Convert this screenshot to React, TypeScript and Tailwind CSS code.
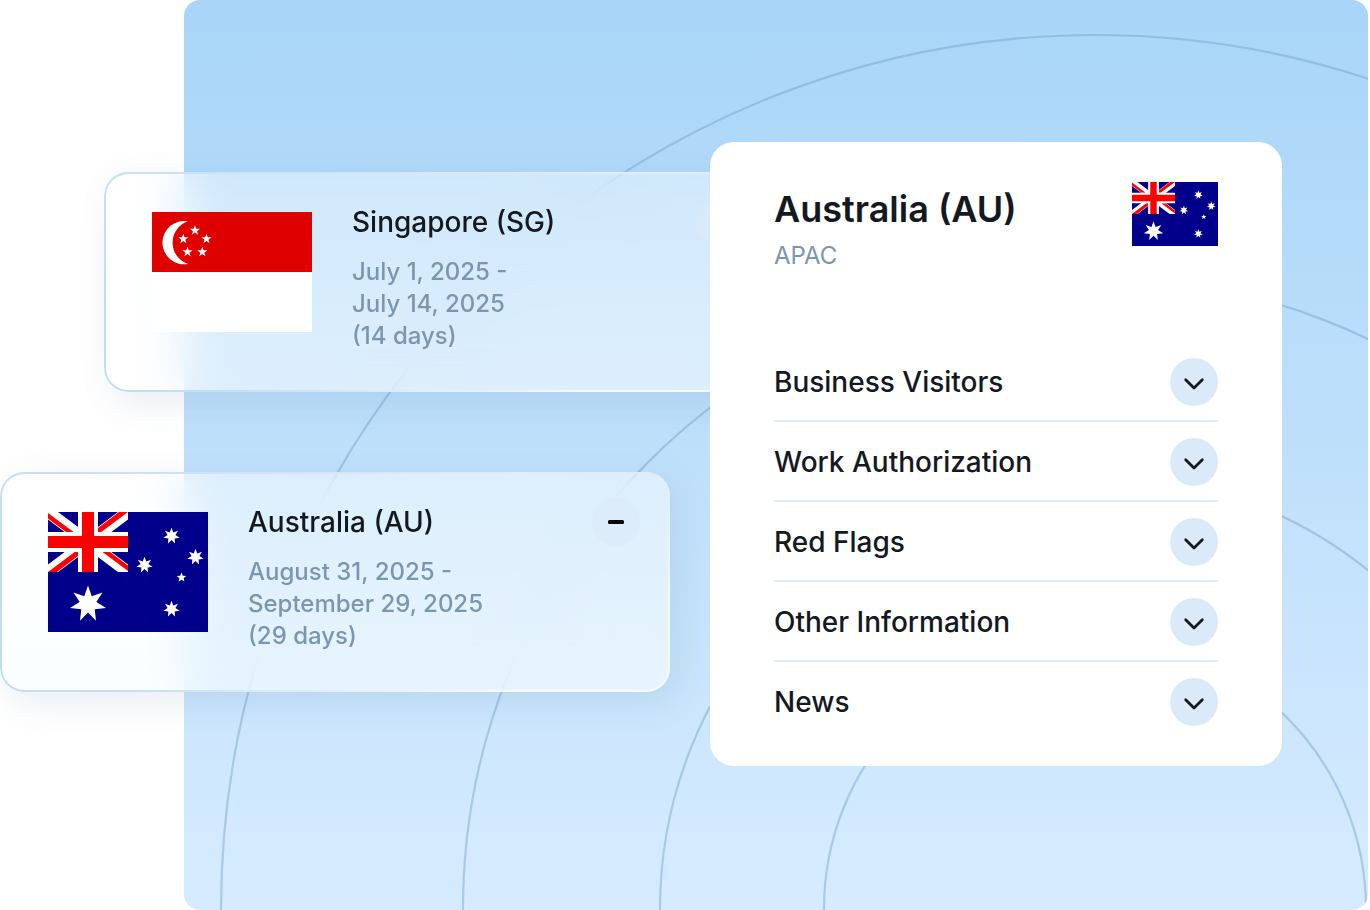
import React from "react";

const star = (cx: number, cy: number, outer: number, inner: number, points: number): string =>
  Array.from({ length: points * 2 }, (_, i) => {
    const r = i % 2 === 0 ? outer : inner;
    const a = (Math.PI * i) / points - Math.PI / 2;
    return `${(cx + r * Math.cos(a)).toFixed(2)},${(cy + r * Math.sin(a)).toFixed(2)}`;
  }).join(" ");

function AustraliaFlag({ className }: { className: string }) {
  return (
    <svg viewBox="0 0 160 120" preserveAspectRatio="none" className={className} role="img" aria-label="Flag of Australia">
      <rect width="160" height="120" fill="#00008b" />
      <svg width="80" height="60" viewBox="0 0 80 60">
        <path d="M0 0 80 60M80 0 0 60" stroke="#fff" strokeWidth="12" />
        <path
          d="M0 1 25.500 20H18L0 6.500ZM80 0H71L50 16V20H53.300ZM0 60H9L30 44V40H26.700ZM80 59 54.500 40H62L80 53.500Z"
          fill="#f00"
        />
        <path d="M40 0v60M0 30h80" stroke="#fff" strokeWidth="20" />
        <path d="M40 0v60M0 30h80" stroke="#f00" strokeWidth="12" />
      </svg>
      <g fill="#fff">
        <polygon points={star(40, 92, 18.5, 8.6, 7)} />
        <polygon points={star(123.5, 24, 8.3, 4, 7)} />
        <polygon points={star(96.5, 53, 8.3, 4, 7)} />
        <polygon points={star(147.5, 45, 8.3, 4, 7)} />
        <polygon points={star(123.5, 97, 8.3, 4, 7)} />
        <polygon points={star(133.5, 65.5, 5, 2.2, 5)} />
      </g>
    </svg>
  );
}

function SingaporeFlag({ className }: { className: string }) {
  return (
    <svg viewBox="0 0 160 120" className={className} role="img" aria-label="Flag of Singapore">
      <rect width="160" height="120" fill="#fff" />
      <rect width="160" height="60" fill="#df0000" />
      <path d="M36 9.300A21.700 21.700 0 1 0 36 52A22.500 22.500 0 0 1 36 9.300Z" fill="#fff" />
      <g fill="#fff">
        <polygon points={star(43, 18.5, 5.3, 2.1, 5)} />
        <polygon points={star(31.3, 27, 5.3, 2.1, 5)} />
        <polygon points={star(54.5, 27, 5.3, 2.1, 5)} />
        <polygon points={star(35.5, 40, 5.3, 2.1, 5)} />
        <polygon points={star(50.3, 40, 5.3, 2.1, 5)} />
      </g>
    </svg>
  );
}

function Rings() {
  return (
    <svg
      viewBox="184 0 1184 910"
      preserveAspectRatio="xMaxYMax slice"
      className="h-full w-full"
      fill="none"
      stroke="#6c98c2"
      strokeOpacity="0.4"
      strokeWidth="2.200"
      aria-hidden="true"
    >
      <circle cx="1095" cy="909" r="874" />
      <circle cx="1095" cy="909" r="632" />
      <circle cx="1095" cy="909" r="435" />
      <circle cx="1095" cy="909" r="271" />
    </svg>
  );
}

interface TripProps {
  flag: React.ReactNode;
  country: string;
  dates: string[];
  className: string;
}

function TripCard({ flag, country, dates, className }: TripProps) {
  return (
    <article
      className={`relative flex h-[220px] w-full items-start gap-10 rounded-3xl py-10 pr-[30px] pl-12 shadow-[8px_10px_36px_rgba(60,95,140,0.12)] backdrop-blur-[24px] ${className}`}
    >
      <div
        aria-hidden="true"
        className="pointer-events-none absolute inset-0 rounded-3xl bg-[linear-gradient(100deg,#bfdcf7_0%,#c4def6_22%,#d9e9f8_42%,#f4faff_75%)] p-0.5 [mask:linear-gradient(#000_0_0)_content-box_exclude,linear-gradient(#000_0_0)]"
      />
      <div
        aria-hidden="true"
        className="pointer-events-none absolute inset-0 rounded-3xl bg-linear-to-b from-[#cfe3f6]/60 to-[#cfe3f6]/0 to-60% p-0.5 [mask:linear-gradient(#000_0_0)_content-box_exclude,linear-gradient(#000_0_0)]"
      />
      {flag}
      <div className="flex-1">
        <h2 className="-mt-2 text-[28px] leading-9 font-medium text-[#14181f]">{country}</h2>
        <p className="mt-4 text-2xl leading-8 font-medium text-[#7b96b0]">
          {dates.map((line) => (
            <span key={line} className="block">
              {line}
            </span>
          ))}
        </p>
      </div>
      <button
        type="button"
        aria-label={`Collapse ${country}`}
        className="-mt-3.5 flex size-12 items-center justify-center rounded-full bg-[#dceaf8]/60"
      >
        <svg width="16" height="4" aria-hidden="true">
          <rect width="16" height="4" rx="1.500" fill="#000" />
        </svg>
      </button>
    </article>
  );
}

const sections = ["Business Visitors", "Work Authorization", "Red Flags", "Other Information", "News"];

export default function App() {
  return (
    <main className="relative isolate min-h-screen overflow-hidden bg-white font-['Inter',sans-serif]">
      <div className="absolute inset-y-0 right-0.5 left-46 -z-10 overflow-hidden rounded-2xl bg-linear-to-b from-[#a8d5f8] via-[#bfe0fb] to-[#d6ebff]">
        <Rings />
      </div>
      <div className="grid grid-cols-[670fr_572fr] items-start gap-10 pt-[142px] pr-22">
        <div className="flex flex-col gap-20 pt-[30px]">
          <TripCard
            className="ml-[104px] bg-linear-to-b from-white/40 to-white/50"
            flag={<SingaporeFlag className="h-[120px] w-40 shrink-0" />}
            country="Singapore (SG)"
            dates={["July 1, 2025 -", "July 14, 2025", "(14 days)"]}
          />
          <TripCard
            className="bg-linear-to-b from-white/45 to-[#f8feff]/60"
            flag={<AustraliaFlag className="h-[120px] w-40 shrink-0" />}
            country="Australia (AU)"
            dates={["August 31, 2025 -", "September 29, 2025", "(29 days)"]}
          />
        </div>
        <section className="relative rounded-3xl bg-white px-16 py-10">
          <header className="flex items-start justify-between">
            <div>
              <h1 className="mt-1 text-4xl leading-[46px] font-semibold text-[#14181f]">Australia (AU)</h1>
              <p className="mt-1 text-2xl leading-10 text-[#7a95b0]">APAC</p>
            </div>
            <AustraliaFlag className="h-16 w-[86px]" />
          </header>
          <ul className="mt-[66px]">
            {sections.map((name) => (
              <li
                key={name}
                className="flex items-center justify-between border-b-2 border-[#dfebf7] pt-4 pb-3.5 last:border-b-0 last:pb-0"
              >
                <span className="text-[28px] leading-9 font-medium text-[#14181f]">{name}</span>
                <button
                  type="button"
                  aria-label={`Expand ${name}`}
                  className="flex size-12 items-center justify-center rounded-full bg-[#dbeaf9]"
                >
                  <svg width="24" height="24" viewBox="0 0 24 24" fill="none" aria-hidden="true">
                    <path
                      d="m3.700 9.700 8.300 8.300 8.300-8.300"
                      stroke="#14181f"
                      strokeWidth="2.800"
                      strokeLinecap="round"
                      strokeLinejoin="round"
                    />
                  </svg>
                </button>
              </li>
            ))}
          </ul>
        </section>
      </div>
    </main>
  );
}
